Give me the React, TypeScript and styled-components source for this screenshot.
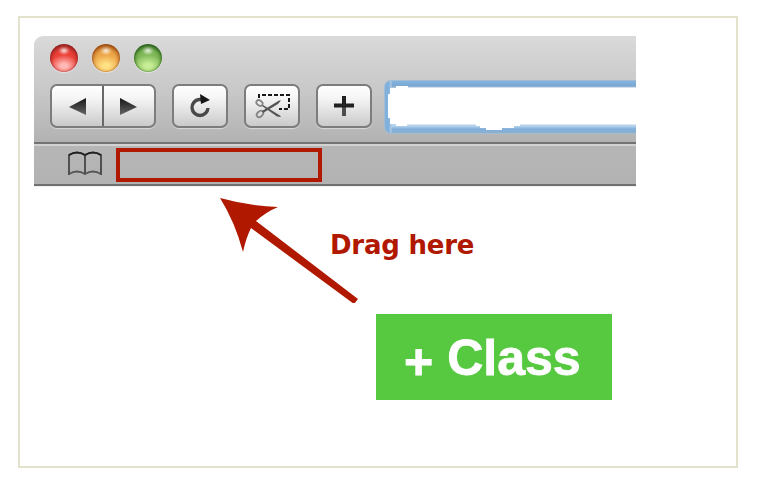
import React from 'react';
import styled, { createGlobalStyle } from 'styled-components';

const GlobalStyle = createGlobalStyle`
  * { box-sizing: border-box; }
  body { margin: 0; background: #fff; overflow: hidden; }
`;

const Frame = styled.main`
  width: 720px;
  height: 452px;
  margin: 16px 0 0 18px;
  padding: 18px 0 0 14px;
  border: 2px solid #e2e2cd;
  background: #fff;
`;

const Page = styled.div`
  display: flow-root;
  height: 486px;
`;

const BrowserWindow = styled.section`
  width: 602px;
  height: 151px;
  border-radius: 9px 0 0 0;
  overflow: hidden;
  border-bottom: 1px solid #f0f0f0;
`;

const Chrome = styled.header`
  height: 106px;
  padding: 7px 0 0 16px;
  background: linear-gradient(#dadada 0, #d1d1d1 24px, #c9c9c9 52px, #b2b2b2 106px);
`;

const TrafficLights = styled.div`
  display: flex;
  gap: 14px;
  height: 37px;
`;

const Light = styled.span<{ $rim: string; $mid: string; $glow: string }>`
  width: 28px;
  height: 28px;
  margin-top: 1px;
  border-radius: 50%;
  background:
    radial-gradient(ellipse 6px 5px at 50% 22%, rgba(255, 255, 255, 0.9), rgba(255, 255, 255, 0) 100%),
    radial-gradient(ellipse 15px 11px at 50% 78%, ${p => p.$glow} 20%, transparent 100%),
    radial-gradient(circle at 50% 54%, ${p => p.$mid} 62%, ${p => p.$rim} 100%);
  background-color: ${p => p.$mid};
  box-shadow: inset 0 3px 4px ${p => p.$rim}, inset 0 0 2px ${p => p.$rim}, 0 1px 1px #e2e2e2;
`;

const Toolbar = styled.div`
  display: flex;
  align-items: flex-start;
  gap: 16px;
  padding-top: 4px;
`;

const ToolButton = styled.button<{ $wide?: boolean }>`
  display: flex;
  width: ${p => (p.$wide ? 106 : 56)}px;
  height: 44px;
  padding: 0;
  border: 2px solid #7c7c7c;
  border-radius: 7px;
  background: linear-gradient(#fff 0, #f5f5f5 12px, #dfdfdf 27px, #cacaca 100%);
  box-shadow: 0 1px 1px #d8d8d8;
`;

const AddressField = styled.div`
  display: flex;
  flex: 1;
  height: 54px;
  margin: -4px 0 0 -4px;
  padding: 4px 0 4px 3px;
  border: 1px solid #a2bcd3;
  border-right: 0;
  border-radius: 7px 0 0 7px;
  background:
    linear-gradient(90deg, #80b0dc 0 4px, #b3cbe3 6px, transparent 7px),
    linear-gradient(#83b4df 0, #7ba8d2 5px, #b6c8dc 7px, #b6d2ec 45px, #7eafdd 48px, #8fafcc 100%);
`;

const BookmarksBar = styled.div`
  display: flex;
  align-items: flex-start;
  height: 44px;
  padding: 2px 0 0 34px;
  border-top: 2px solid #737373;
  border-bottom: 2px solid #707070;
  background: linear-gradient(#d2d2d2 0 2px, #b6b6b6 2px, #b2b2b2 100%);
`;

const DropTarget = styled.div`
  width: 206px;
  height: 34px;
  margin: 2px 0 0 14px;
  border: 4px solid #b11800;
`;

const Instructions = styled.section`
  display: flex;
`;

const DragNote = styled.div`
  display: flex;
  flex-direction: column;
`;

const Label = styled.p`
  margin: 41px 0 0 -30px;
  height: 34px;
  color: #b11800;
  font: bold 26px/34px "DejaVu Sans", sans-serif;
  letter-spacing: -0.22px;
  white-space: nowrap;
`;

const ClassButton = styled.button`
  display: flex;
  align-items: center;
  gap: 14px;
  width: 236px;
  height: 86px;
  margin: 52px 0 0 16px;
  padding: 1px 0 0 28px;
  border: 0;
  background: #57c940;
  color: #fff;
  font: bold 50px/86px "Liberation Sans", Arial, sans-serif;
  -webkit-text-stroke: 0.8px #fff;
  white-space: nowrap;
`;

const PlusSign = styled.span`
  padding-top: 8px;
  line-height: 78px;
`;

const DragArrow = () => (
  <svg width="140" height="106" viewBox="220 197 140 106">
    <path d="M220 198Q249 206 278 207Q266 212 256 221L358 299L354 304L251 228Q246 238 243 252Q235 222 220 198Z" fill="#b11800" />
  </svg>
);

const ArrowSlot = styled.div`
  width: 140px;
  height: 106px;
  margin: 10px 0 0 186px;
`;

const NavigationIcon = () => (
  <svg width="102" height="40" viewBox="52 86 102 40">
    <defs>
      <linearGradient id="navShade" x1="0" y1="0" x2="0" y2="1">
        <stop stopColor="#161616" /><stop offset="1" stopColor="#666" />
      </linearGradient>
    </defs>
    <path d="M69 107L86 98V115ZM137 107L120 98V115Z" fill="url(#navShade)" />
    <path d="M103 86V126" stroke="#686868" strokeWidth="2" />
  </svg>
);

const ReloadIcon = () => (
  <svg width="52" height="40" viewBox="174 86 52 40">
    <path d="M202 99.500H199A8 8 0 1 0 208 108" fill="none" stroke="#494949" strokeWidth="3.400" />
    <path d="M200 94L210 100L201 104Z" fill="#171717" />
  </svg>
);

const ClipIcon = () => (
  <svg width="52" height="40" viewBox="246 86 52 40">
    <path d="M259 98V95H289V109H279" fill="none" stroke="#171717" strokeWidth="2" strokeDasharray="4 2" />
    <g fill="none" stroke="#848484" strokeWidth="1.700">
      <ellipse cx="259.500" cy="103" rx="3.400" ry="2.500" transform="rotate(35 259.500 103)" />
      <ellipse cx="260" cy="114" rx="3.700" ry="2.600" transform="rotate(-40 260 114)" />
    </g>
    <path d="M263 105L280 115.500L281 117L277 116.500L262 106ZM262 111L279 100.500L281 100.500L278 104L263 113Z" fill="#555" />
  </svg>
);

const PlusIcon = () => (
  <svg width="52" height="40" viewBox="318 86 52 40">
    <path d="M344 96V116" stroke="#4d4d4d" strokeWidth="4" />
    <path d="M344 96V107M334 105.500H354" stroke="#202020" strokeWidth="4" />
  </svg>
);

const BookIcon = () => (
  <svg width="34" height="36" viewBox="68 146 34 36">
    <path d="M69 175V155Q77 150 85 155Q93 150 101 155V175M85 155V174" fill="none" stroke="#3e3e3e" strokeWidth="1.700" />
    <path d="M69 155Q77 150 85 155Q93 150 101 155" fill="none" stroke="#222" strokeWidth="2" />
    <path d="M69 174Q77 169 85 174Q93 169 101 174" fill="none" stroke="#555" strokeWidth="2" />
  </svg>
);

const AddressInterior = () => (
  <svg width="248" height="47" viewBox="388 85 248 47">
    <path d="M388 94H390V88H396V86H408V87.500H636V124.500H520V126H514V128H502V130H486V128H480V126H476V124.500H407V126H396V124H390V118H388Z" fill="#fff" />
  </svg>
);

export default function App() {
  return (
    <Page>
      <GlobalStyle />
      <Frame>
        <BrowserWindow>
          <Chrome>
            <TrafficLights>
              <Light $rim="#8f2020" $mid="#eb4138" $glow="#ffb9b6" />
              <Light $rim="#98460f" $mid="#eda749" $glow="#ffe184" />
              <Light $rim="#285e1a" $mid="#81ba58" $glow="#c8ed96" />
            </TrafficLights>
            <Toolbar>
              <ToolButton $wide aria-label="Back and forward"><NavigationIcon /></ToolButton>
              <ToolButton aria-label="Reload"><ReloadIcon /></ToolButton>
              <ToolButton aria-label="Clip"><ClipIcon /></ToolButton>
              <ToolButton aria-label="Add"><PlusIcon /></ToolButton>
              <AddressField><AddressInterior /></AddressField>
            </Toolbar>
          </Chrome>
          <BookmarksBar><BookIcon /><DropTarget /></BookmarksBar>
        </BrowserWindow>
        <Instructions>
          <ArrowSlot><DragArrow /></ArrowSlot>
          <DragNote>
            <Label>Drag here</Label>
            <ClassButton><PlusSign>+</PlusSign><span>Class</span></ClassButton>
          </DragNote>
        </Instructions>
      </Frame>
    </Page>
  );
}
